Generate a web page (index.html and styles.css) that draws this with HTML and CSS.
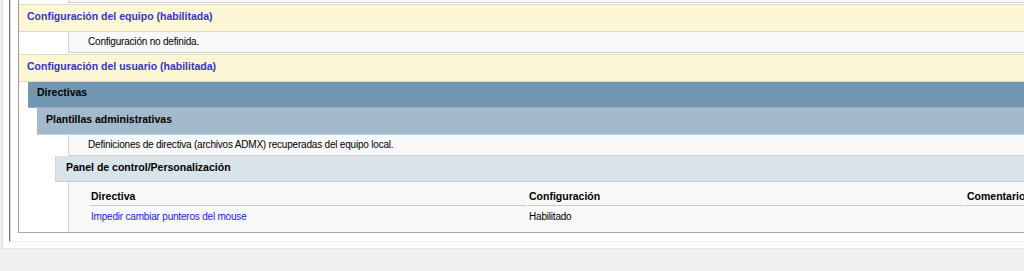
FILE: index.html
```html
<!DOCTYPE html>
<html lang="es">
<head>
    <meta charset="UTF-8">
    <title>Informe de directiva de grupo</title>
    <link rel="stylesheet" href="styles.css">
</head>
<body>

<div class="frame">
    <div class="viewer">
        <div class="report">
            <div class="info tail"></div>

            <div class="he0 first">Configuración del equipo (habilitada)</div>
            <div class="info">Configuración no definida.</div>

            <div class="he0">Configuración del usuario (habilitada)</div>
            <div class="he1">Directivas</div>
            <div class="he2">Plantillas administrativas</div>
            <div class="info">Definiciones de directiva (archivos ADMX) recuperadas del equipo local.</div>
            <div class="he3">Panel de control/Personalización</div>

            <div class="info table-box">
                <table class="settings">
                    <tr>
                        <th>Directiva</th>
                        <th>Configuración</th>
                        <th>Comentario</th>
                    </tr>
                    <tr>
                        <td><a class="explain" href="#">Impedir cambiar punteros del mouse</a></td>
                        <td>Habilitado</td>
                        <td></td>
                    </tr>
                </table>
            </div>
        </div>
    </div>
</div>

</body>
</html>
```

FILE: styles.css
```css
body {
    margin: 0;
    background-color: #f0f0f0;
    font-family: "Liberation Sans", Arial, sans-serif;
    overflow: hidden;
}
.frame {
    margin-left: 2px;
    padding-left: 6px;
    padding-bottom: 6px;
    background-color: #fff;
    border-left: 1px solid #dcdcdc;
    border-bottom: 1px solid #e4e4e4;
}
.viewer {
    border-left: 1px solid #7c7c7c;
    border-bottom: 1px solid #ececec;
    padding-left: 8px;
    padding-bottom: 8px;
    box-shadow: inset 1px 0 #cfcfcf;
}
.report {
    border-left: 1px solid #9a9a9a;
    border-bottom: 1px solid #a8a8a8;
}

/* section headers */
.he0, .he1, .he2, .he3 {
    font-size: 10.5px;
    font-weight: bold;
    line-height: 16px;
    white-space: nowrap;
}
.he0 {
    color: #3333cc;
    background-color: #fef7d6;
    border-top: 1px solid #e2ddca;
    border-bottom: 1px solid #dcd8c6;
    padding: 3px 0 7px 8px;
    margin-top: 1px;
}
.he1 {
    background-color: #7197b3;
    border-bottom: 1px solid #98b0c2;
    margin-left: 9px;
    padding: 2px 0 7px 9px;
}
.he2 {
    background-color: #a3b9cc;
    border-bottom: 1px solid #c6d0da;
    margin-left: 18px;
    padding: 3px 0 7px 9px;
}
.he3 {
    background-color: #d9e3ea;
    border-left: 1px solid #cdd6dd;
    border-bottom: 1px solid #c9cdd1;
    margin-left: 36px;
    padding: 3px 0 6px 10px;
}

/* grey content rows */
.info {
    margin-left: 49px;
    border-left: 1px solid #d4d4d4;
    border-bottom: 1px solid #d0d0d0;
    background-color: #f8f8f8;
    padding: 2px 0 2px 19px;
    font-size: 10px;
    letter-spacing: -0.2px;
    line-height: 16px;
    white-space: nowrap;
    overflow: hidden;
}
.info.tail {
    height: 2px;
    padding: 0;
    border-bottom-color: #d2d2d2;
}
.table-box {
    padding: 6px 0 7px 21px;
    border-bottom: none;
}

.settings {
    border-collapse: separate;
    border-spacing: 0;
    table-layout: fixed;
    width: 1314px;
}
.settings th {
    width: 434px;
    text-align: left;
    font-size: 10.5px;
    letter-spacing: 0;
    font-weight: bold;
    color: #000;
    padding: 0 0 1px 1px;
    border-bottom: 1px solid #c9c9c9;
    border-right: 3px solid #f8f8f8;
}
.settings td {
    padding: 3px 0 0 1px;
    color: #000;
}
.explain {
    color: #2020f0;
    text-decoration: none;
}
```
